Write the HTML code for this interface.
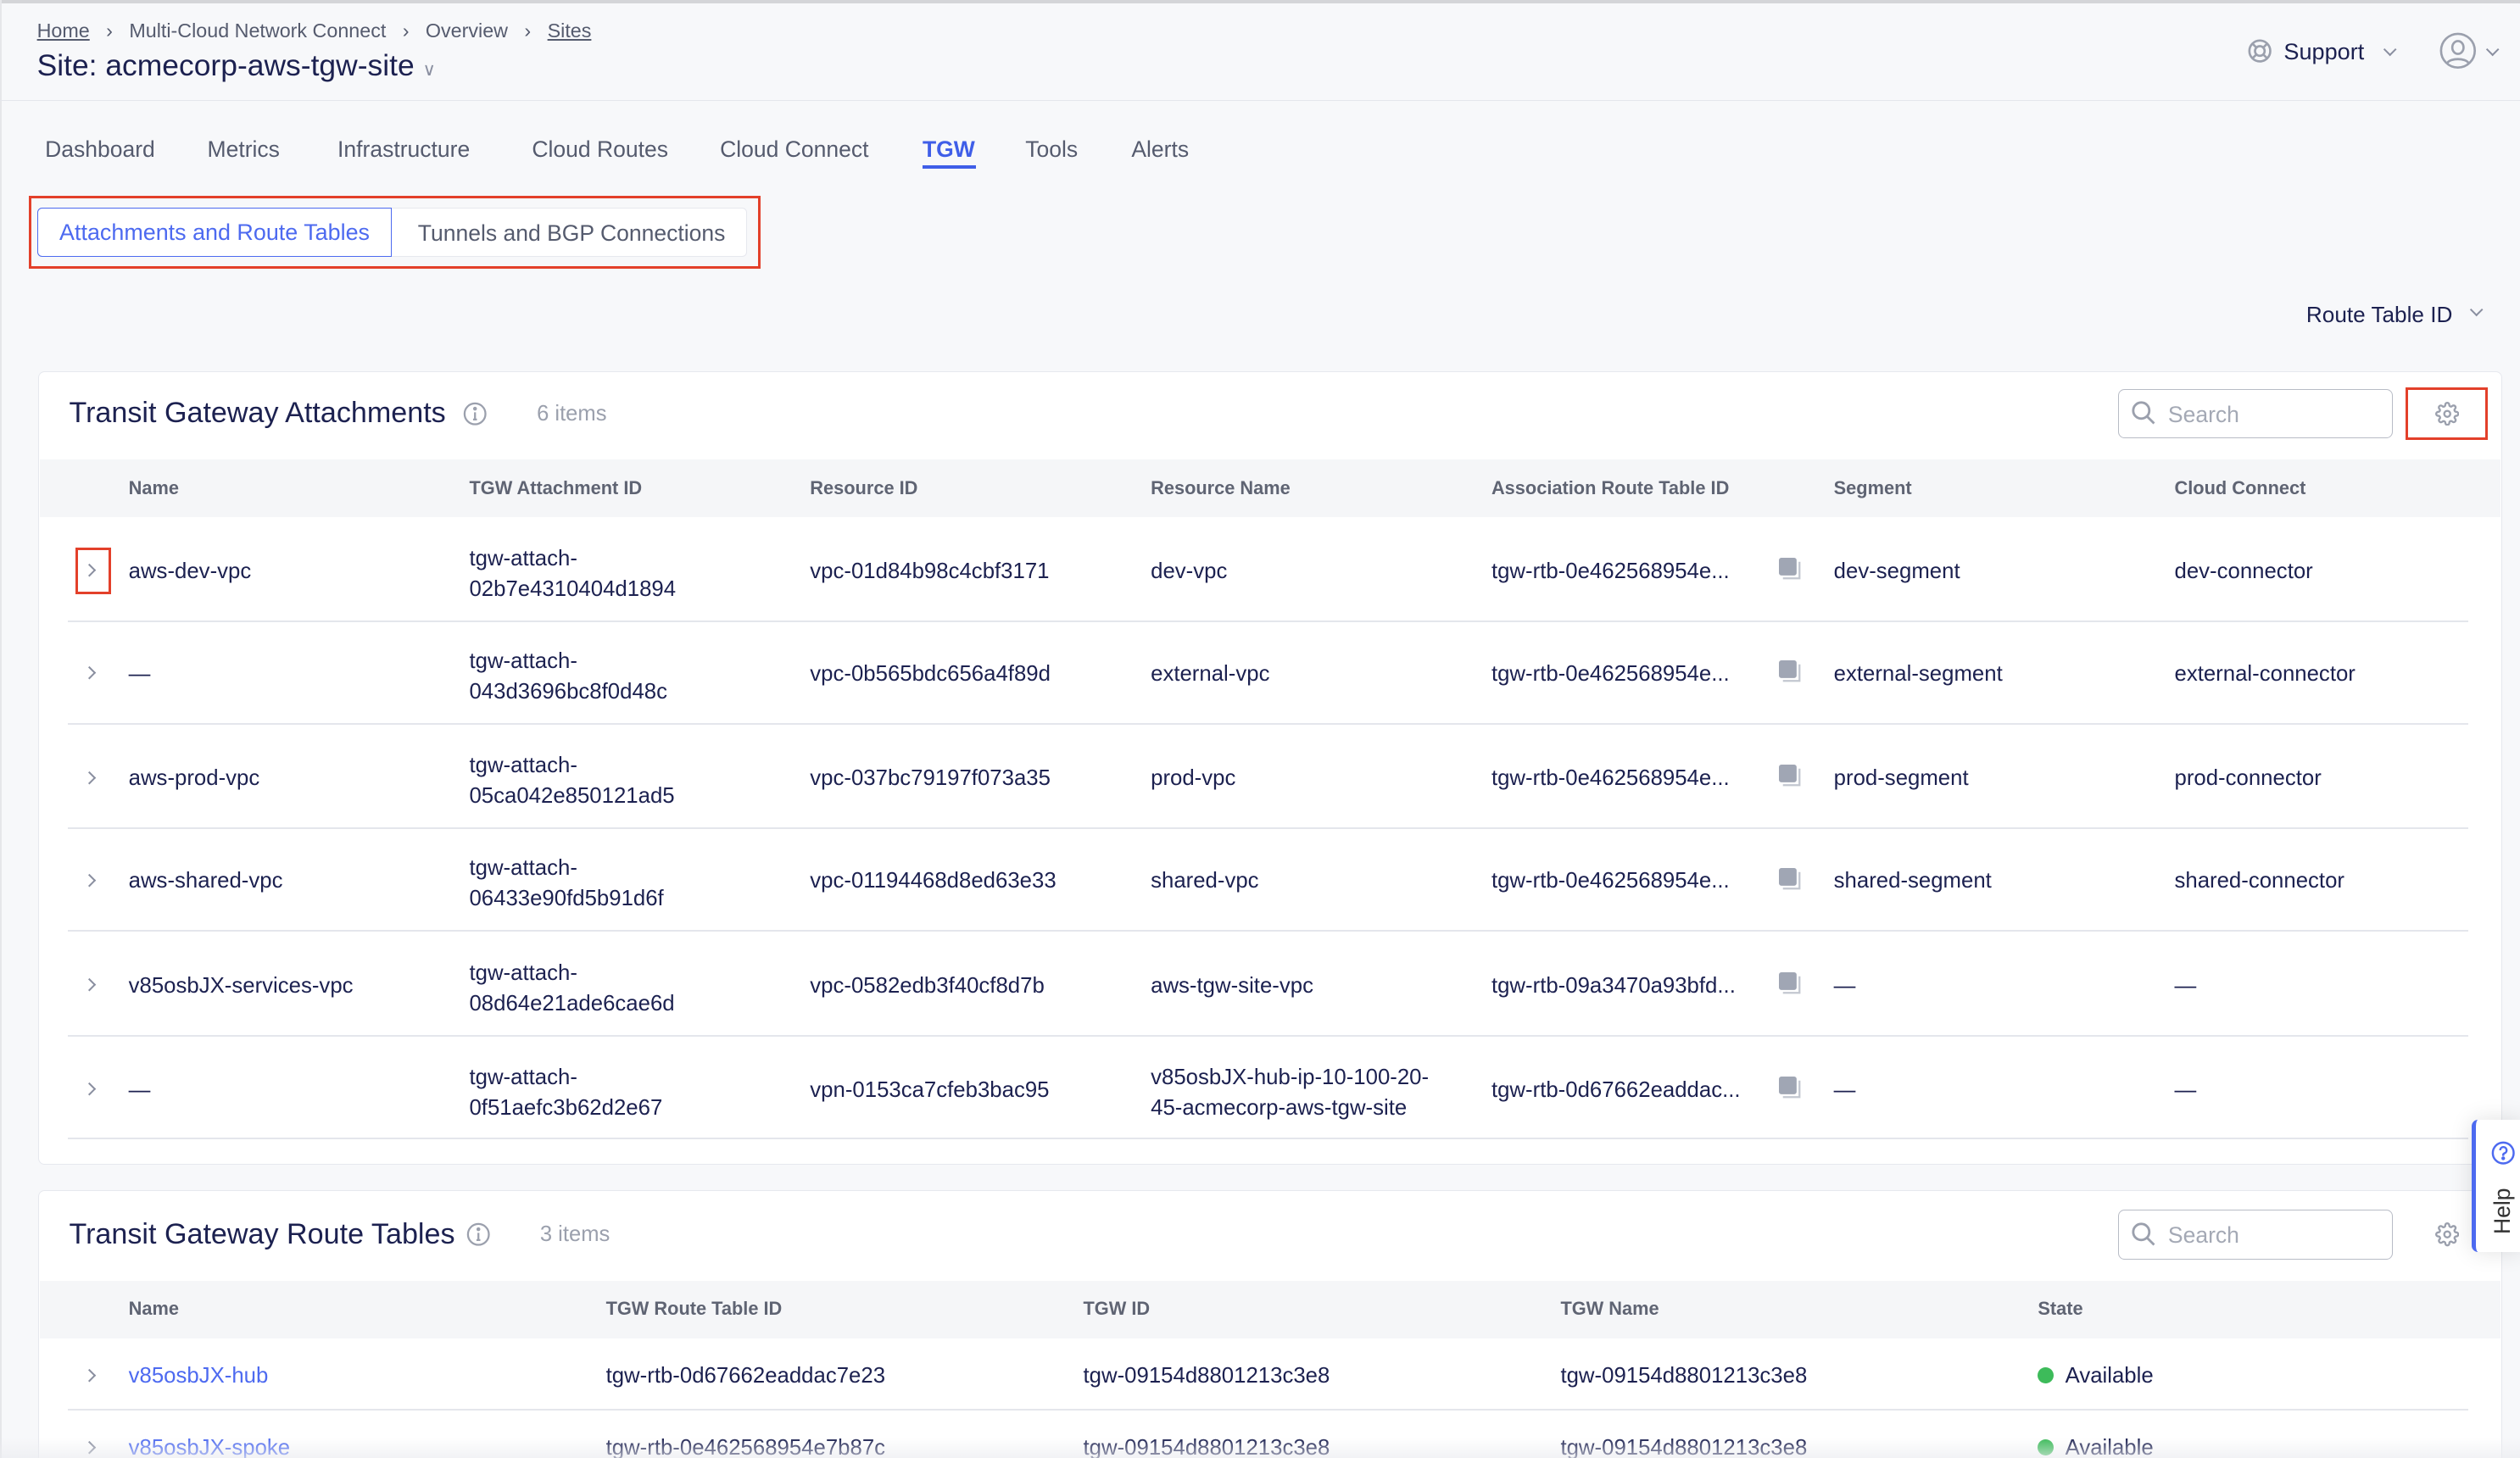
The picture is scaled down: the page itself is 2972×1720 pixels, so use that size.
<!DOCTYPE html>
<html><head><meta charset="utf-8">
<style>
*{box-sizing:border-box;margin:0;padding:0}
html,body{width:2972px;height:1720px;overflow:hidden;background:#f7f8fa}
#z{zoom:1.89541;width:1568px;height:908px;position:relative;font-family:"Liberation Sans",sans-serif;color:#1c2150;font-size:13.6px}
.a{position:absolute;white-space:nowrap}
.muted{color:#555b6e}
.hd{font-weight:bold;font-size:11.5px;color:#5f6473}
.chev{position:absolute;width:6px;height:6px;border-right:1.2px solid #8a8fa0;border-bottom:1.2px solid #8a8fa0}
.card{position:absolute;background:#fff;border:1px solid #e6e8ee;border-radius:4px}
.line{position:absolute;height:1px;background:#e4e6ec}
.copy{position:absolute;width:14px;height:14px}
.r{top:0}
</style></head><body><div id="z">
<div class="a" style="left:0;top:0;width:1568px;height:2px;background:#d4d5d8"></div>
<div class="a" style="left:0;top:0;width:1px;height:908px;background:#e6e7ea"></div>
<div class="a muted" style="left:23px;top:12px;font-size:12.3px">
<span style="text-decoration:underline">Home</span>&nbsp;&nbsp;&nbsp;›&nbsp;&nbsp;&nbsp;Multi-Cloud Network Connect&nbsp;&nbsp;&nbsp;›&nbsp;&nbsp;&nbsp;Overview&nbsp;&nbsp;&nbsp;›&nbsp;&nbsp;&nbsp;<span style="text-decoration:underline">Sites</span></div>
<div class="a" style="left:23px;top:30px;font-size:18.7px">Site: acmecorp-aws-tgw-site <span style="font-size:11px;color:#8a8fa0">&#x2228;</span></div>
<div class="a" style="left:0;top:62px;width:1568px;height:1px;background:#e4e6ec"></div>
<svg class="a" style="left:1398px;top:24px" width="16" height="16" viewBox="0 0 16 16" fill="none" stroke="#9ba0ad" stroke-width="1.4"><circle cx="8" cy="8" r="6.5"/><circle cx="8" cy="8" r="3"/><path d="M3.4 3.4l2.5 2.5M12.6 3.4l-2.5 2.5M3.4 12.6l2.5-2.5M12.6 12.6l-2.5-2.5"/></svg>
<div class="a" style="left:1421px;top:24px;font-size:14.3px">Support</div>
<div class="chev" style="left:1484px;top:28px;transform:rotate(45deg)"></div>
<svg class="a" style="left:1518px;top:20px" width="23" height="23" viewBox="0 0 23 23" fill="none" stroke="#9ba0ad" stroke-width="1.4"><circle cx="11.5" cy="11.5" r="10.5"/><ellipse cx="11.5" cy="9.5" rx="3.5" ry="4"/><path d="M5 19c2-3 11-3 13 0"/></svg>
<div class="chev" style="left:1548px;top:28px;transform:rotate(45deg)"></div>
<div class="a muted" style="left:28px;top:85px;font-size:14px">Dashboard</div>
<div class="a muted" style="left:129px;top:85px;font-size:14px">Metrics</div>
<div class="a muted" style="left:210px;top:85px;font-size:14px">Infrastructure</div>
<div class="a muted" style="left:331px;top:85px;font-size:14px">Cloud Routes</div>
<div class="a muted" style="left:448px;top:85px;font-size:14px">Cloud Connect</div>
<div class="a" style="left:574px;top:85px;font-size:14px;color:#3f5ee8;font-weight:bold">TGW</div>
<div class="a" style="left:574px;top:103px;width:33px;height:2px;background:#3f5ee8"></div>
<div class="a muted" style="left:638px;top:85px;font-size:14px">Tools</div>
<div class="a muted" style="left:704px;top:85px;font-size:14px">Alerts</div>
<div class="a" style="left:18px;top:122px;width:455px;height:45px;border:2px solid #e3402a"></div>
<div class="a" style="left:23px;top:129px;width:442px;height:31px;background:#fff;border:1px solid #e6e8ee;border-radius:3px"></div>
<div class="a" style="left:23px;top:129px;width:221px;height:31px;border:1px solid #4d6af0;border-radius:3px 0 0 3px;background:#fff;color:#4d6af0;font-size:14.2px;text-align:center;line-height:30px">Attachments and Route Tables</div>
<div class="a muted" style="left:260px;top:137px;font-size:14px">Tunnels and BGP Connections</div>
<div class="a" style="left:1435px;top:188px;font-size:13.8px">Route Table ID</div>
<div class="chev" style="left:1538px;top:190px;transform:rotate(45deg)"></div>

<div class="card" style="left:24px;top:231px;width:1533px;height:494px"></div>
<div class="a" style="left:43px;top:247px;font-size:18px">Transit Gateway Attachments</div>
<svg class="a" style="left:288px;top:250px" width="15" height="15" viewBox="0 0 15 15" fill="none" stroke="#9ba0ad" stroke-width="1.2"><circle cx="7.5" cy="7.5" r="6.5"/><path d="M7.5 6.5v4.5M6.3 11h2.4"/><circle cx="7.5" cy="4.3" r=".6" fill="#9ba0ad"/></svg>
<div class="a" style="left:334px;top:250px;font-size:13.5px;color:#9ba0ad">6 items</div>
<div class="a" style="left:1318px;top:242px;width:171px;height:31px;border:1px solid #b8bcc6;border-radius:4px;background:#fff"></div>
<svg class="a" style="left:1326px;top:249px" width="16" height="16" viewBox="0 0 16 16" fill="none" stroke="#9ba0ad" stroke-width="1.5"><circle cx="6.5" cy="6.5" r="5"/><path d="M10.2 10.2l4.3 4.3"/></svg>
<div class="a" style="left:1349px;top:250px;font-size:14px;color:#a4a9b5">Search</div>
<div class="a" style="left:1497px;top:241px;width:51px;height:33px;border:2px solid #e3402a"></div>
<svg class="a" style="left:1515px;top:250px" width="15" height="15" viewBox="0 0 24 24" fill="none" stroke="#9ba0ad" stroke-width="2"><circle cx="12" cy="12" r="3"/><path d="M19.4 15a1.65 1.65 0 0 0 .33 1.82l.06.06a2 2 0 1 1-2.83 2.83l-.06-.06a1.65 1.65 0 0 0-1.82-.33 1.65 1.65 0 0 0-1 1.51V21a2 2 0 0 1-4 0v-.09A1.65 1.65 0 0 0 9 19.4a1.65 1.65 0 0 0-1.82.33l-.06.06a2 2 0 1 1-2.83-2.83l.06-.06A1.65 1.65 0 0 0 4.68 15a1.65 1.65 0 0 0-1.51-1H3a2 2 0 0 1 0-4h.09A1.65 1.65 0 0 0 4.6 9a1.65 1.65 0 0 0-.33-1.82l-.06-.06a2 2 0 1 1 2.83-2.83l.06.06A1.65 1.65 0 0 0 9 4.68a1.65 1.65 0 0 0 1-1.51V3a2 2 0 0 1 4 0v.09a1.65 1.65 0 0 0 1 1.510 1.65 1.65 0 0 0 1.82-.33l.06-.06a2 2 0 1 1 2.83 2.83l-.06.06A1.65 1.65 0 0 0 19.4 9a1.65 1.65 0 0 0 1.51 1H21a2 2 0 0 1 0 4h-.09a1.65 1.65 0 0 0-1.51 1z"/></svg>
<div class="a" style="left:25px;top:286px;width:1531px;height:36px;background:#f5f6f8"></div>
<div class="a hd" style="left:80px;top:297px">Name</div>
<div class="a hd" style="left:292px;top:297px">TGW Attachment ID</div>
<div class="a hd" style="left:504px;top:297px">Resource ID</div>
<div class="a hd" style="left:716px;top:297px">Resource Name</div>
<div class="a hd" style="left:928px;top:297px">Association Route Table ID</div>
<div class="a hd" style="left:1141px;top:297px">Segment</div>
<div class="a hd" style="left:1353px;top:297px">Cloud Connect</div>

<div class="a" style="left:47px;top:341px;width:22px;height:29px;border:2px solid #e3402a"></div>
<div class="chev" style="left:53px;top:352px;transform:rotate(-45deg)"></div>
<div class="a" style="left:80px;top:348px">aws-dev-vpc</div>
<div class="a" style="left:292px;top:338px;line-height:19px">tgw-attach-<br>02b7e4310404d1894</div>
<div class="a" style="left:504px;top:348px">vpc-01d84b98c4cbf3171</div>
<div class="a" style="left:716px;top:348px">dev-vpc</div>
<div class="a" style="left:928px;top:348px">tgw-rtb-0e462568954e...</div>
<div class="a" style="left:1141px;top:348px">dev-segment</div>
<div class="a" style="left:1353px;top:348px">dev-connector</div>
<div class="line" style="left:42px;top:386px;width:1494px"></div>

<div class="chev" style="left:53px;top:416px;transform:rotate(-45deg)"></div>
<div class="a" style="left:80px;top:412px">—</div>
<div class="a" style="left:292px;top:402px;line-height:19px">tgw-attach-<br>043d3696bc8f0d48c</div>
<div class="a" style="left:504px;top:412px">vpc-0b565bdc656a4f89d</div>
<div class="a" style="left:716px;top:412px">external-vpc</div>
<div class="a" style="left:928px;top:412px">tgw-rtb-0e462568954e...</div>
<div class="a" style="left:1141px;top:412px">external-segment</div>
<div class="a" style="left:1353px;top:412px">external-connector</div>
<div class="line" style="left:42px;top:450px;width:1494px"></div>

<div class="chev" style="left:53px;top:481px;transform:rotate(-45deg)"></div>
<div class="a" style="left:80px;top:477px">aws-prod-vpc</div>
<div class="a" style="left:292px;top:467px;line-height:19px">tgw-attach-<br>05ca042e850121ad5</div>
<div class="a" style="left:504px;top:477px">vpc-037bc79197f073a35</div>
<div class="a" style="left:716px;top:477px">prod-vpc</div>
<div class="a" style="left:928px;top:477px">tgw-rtb-0e462568954e...</div>
<div class="a" style="left:1141px;top:477px">prod-segment</div>
<div class="a" style="left:1353px;top:477px">prod-connector</div>
<div class="line" style="left:42px;top:515px;width:1494px"></div>

<div class="chev" style="left:53px;top:545px;transform:rotate(-45deg)"></div>
<div class="a" style="left:80px;top:541px">aws-shared-vpc</div>
<div class="a" style="left:292px;top:531px;line-height:19px">tgw-attach-<br>06433e90fd5b91d6f</div>
<div class="a" style="left:504px;top:541px">vpc-01194468d8ed63e33</div>
<div class="a" style="left:716px;top:541px">shared-vpc</div>
<div class="a" style="left:928px;top:541px">tgw-rtb-0e462568954e...</div>
<div class="a" style="left:1141px;top:541px">shared-segment</div>
<div class="a" style="left:1353px;top:541px">shared-connector</div>
<div class="line" style="left:42px;top:579px;width:1494px"></div>

<div class="chev" style="left:53px;top:610px;transform:rotate(-45deg)"></div>
<div class="a" style="left:80px;top:606px">v85osbJX-services-vpc</div>
<div class="a" style="left:292px;top:596px;line-height:19px">tgw-attach-<br>08d64e21ade6cae6d</div>
<div class="a" style="left:504px;top:606px">vpc-0582edb3f40cf8d7b</div>
<div class="a" style="left:716px;top:606px">aws-tgw-site-vpc</div>
<div class="a" style="left:928px;top:606px">tgw-rtb-09a3470a93bfd...</div>
<div class="a" style="left:1141px;top:606px">—</div>
<div class="a" style="left:1353px;top:606px">—</div>
<div class="line" style="left:42px;top:644px;width:1494px"></div>

<div class="chev" style="left:53px;top:675px;transform:rotate(-45deg)"></div>
<div class="a" style="left:80px;top:671px">—</div>
<div class="a" style="left:292px;top:661px;line-height:19px">tgw-attach-<br>0f51aefc3b62d2e67</div>
<div class="a" style="left:504px;top:671px">vpn-0153ca7cfeb3bac95</div>
<div class="a" style="left:716px;top:661px;line-height:19px">v85osbJX-hub-ip-10-100-20-<br>45-acmecorp-aws-tgw-site</div>
<div class="a" style="left:928px;top:671px">tgw-rtb-0d67662eaddac...</div>
<div class="a" style="left:1141px;top:671px">—</div>
<div class="a" style="left:1353px;top:671px">—</div>
<div class="line" style="left:42px;top:708px;width:1494px"></div>

<svg class="copy" style="left:1107px;top:347px" viewBox="0 0 14 14"><rect x="0" y="0" width="11" height="11" rx="1.5" fill="#a0a6b4"/><path d="M12.8 2.5v10.3H2.5" fill="none" stroke="#c3c7d0" stroke-width="1.2"/></svg>
<svg class="copy" style="left:1107px;top:411px" viewBox="0 0 14 14"><rect x="0" y="0" width="11" height="11" rx="1.5" fill="#a0a6b4"/><path d="M12.8 2.5v10.3H2.5" fill="none" stroke="#c3c7d0" stroke-width="1.2"/></svg>
<svg class="copy" style="left:1107px;top:476px" viewBox="0 0 14 14"><rect x="0" y="0" width="11" height="11" rx="1.5" fill="#a0a6b4"/><path d="M12.8 2.5v10.3H2.5" fill="none" stroke="#c3c7d0" stroke-width="1.2"/></svg>
<svg class="copy" style="left:1107px;top:540px" viewBox="0 0 14 14"><rect x="0" y="0" width="11" height="11" rx="1.5" fill="#a0a6b4"/><path d="M12.8 2.5v10.3H2.5" fill="none" stroke="#c3c7d0" stroke-width="1.2"/></svg>
<svg class="copy" style="left:1107px;top:605px" viewBox="0 0 14 14"><rect x="0" y="0" width="11" height="11" rx="1.5" fill="#a0a6b4"/><path d="M12.8 2.5v10.3H2.5" fill="none" stroke="#c3c7d0" stroke-width="1.2"/></svg>
<svg class="copy" style="left:1107px;top:670px" viewBox="0 0 14 14"><rect x="0" y="0" width="11" height="11" rx="1.5" fill="#a0a6b4"/><path d="M12.8 2.5v10.3H2.5" fill="none" stroke="#c3c7d0" stroke-width="1.2"/></svg>

<div class="card" style="left:24px;top:741px;width:1533px;height:200px"></div>
<div class="a" style="left:43px;top:758px;font-size:18px">Transit Gateway Route Tables</div>
<svg class="a" style="left:290px;top:761px" width="15" height="15" viewBox="0 0 15 15" fill="none" stroke="#9ba0ad" stroke-width="1.2"><circle cx="7.5" cy="7.5" r="6.5"/><path d="M7.5 6.5v4.5M6.3 11h2.4"/><circle cx="7.5" cy="4.3" r=".6" fill="#9ba0ad"/></svg>
<div class="a" style="left:336px;top:761px;font-size:13.5px;color:#9ba0ad">3 items</div>
<div class="a" style="left:1318px;top:753px;width:171px;height:31px;border:1px solid #b8bcc6;border-radius:4px;background:#fff"></div>
<svg class="a" style="left:1326px;top:760px" width="16" height="16" viewBox="0 0 16 16" fill="none" stroke="#9ba0ad" stroke-width="1.5"><circle cx="6.5" cy="6.5" r="5"/><path d="M10.2 10.2l4.3 4.3"/></svg>
<div class="a" style="left:1349px;top:761px;font-size:14px;color:#a4a9b5">Search</div>
<svg class="a" style="left:1515px;top:761px" width="15" height="15" viewBox="0 0 24 24" fill="none" stroke="#9ba0ad" stroke-width="2"><circle cx="12" cy="12" r="3"/><path d="M19.4 15a1.65 1.65 0 0 0 .33 1.82l.06.06a2 2 0 1 1-2.83 2.83l-.06-.06a1.65 1.65 0 0 0-1.82-.33 1.65 1.65 0 0 0-1 1.51V21a2 2 0 0 1-4 0v-.09A1.65 1.65 0 0 0 9 19.4a1.65 1.65 0 0 0-1.82.33l-.06.06a2 2 0 1 1-2.83-2.83l.06-.06A1.65 1.65 0 0 0 4.68 15a1.65 1.65 0 0 0-1.51-1H3a2 2 0 0 1 0-4h.09A1.65 1.65 0 0 0 4.6 9a1.65 1.65 0 0 0-.33-1.82l-.06-.06a2 2 0 1 1 2.83-2.83l.06.06A1.65 1.65 0 0 0 9 4.68a1.65 1.65 0 0 0 1-1.51V3a2 2 0 0 1 4 0v.09a1.65 1.65 0 0 0 1 1.51 1.65 1.65 0 0 0 1.82-.33l.06-.06a2 2 0 1 1 2.83 2.83l-.06.06A1.65 1.65 0 0 0 19.4 9a1.65 1.65 0 0 0 1.51 1H21a2 2 0 0 1 0 4h-.09a1.65 1.65 0 0 0-1.51 1z"/></svg>
<div class="a" style="left:25px;top:797px;width:1531px;height:36px;background:#f5f6f8"></div>
<div class="a hd" style="left:80px;top:808px">Name</div>
<div class="a hd" style="left:377px;top:808px">TGW Route Table ID</div>
<div class="a hd" style="left:674px;top:808px">TGW ID</div>
<div class="a hd" style="left:971px;top:808px">TGW Name</div>
<div class="a hd" style="left:1268px;top:808px">State</div>
<div class="chev" style="left:53px;top:853px;transform:rotate(-45deg)"></div>
<div class="a" style="left:80px;top:849px;color:#4d6af0">v85osbJX-hub</div>
<div class="a" style="left:377px;top:849px">tgw-rtb-0d67662eaddac7e23</div>
<div class="a" style="left:674px;top:849px">tgw-09154d8801213c3e8</div>
<div class="a" style="left:971px;top:849px">tgw-09154d8801213c3e8</div>
<div class="a" style="left:1268px;top:851px;width:10px;height:10px;border-radius:50%;background:#3dbb5a"></div>
<div class="a" style="left:1285px;top:849px">Available</div>
<div class="line" style="left:42px;top:877px;width:1494px"></div>
<div class="chev" style="left:53px;top:898px;transform:rotate(-45deg)"></div>
<div class="a" style="left:80px;top:894px;color:#4d6af0">v85osbJX-spoke</div>
<div class="a" style="left:377px;top:894px">tgw-rtb-0e462568954e7b87c</div>
<div class="a" style="left:674px;top:894px">tgw-09154d8801213c3e8</div>
<div class="a" style="left:971px;top:894px">tgw-09154d8801213c3e8</div>
<div class="a" style="left:1268px;top:896px;width:10px;height:10px;border-radius:50%;background:#3dbb5a"></div>
<div class="a" style="left:1285px;top:894px">Available</div>
<div class="a" style="left:0;top:895px;width:1568px;height:13px;background:linear-gradient(rgba(240,241,244,0),rgba(235,236,240,.7))"></div>

<div class="a" style="left:1538px;top:697px;width:32px;height:82px;background:#fff;border-left:3px solid #4d6af0;border-radius:4px 0 0 4px;box-shadow:0 0 14px rgba(0,0,0,.12)"></div>
<svg class="a" style="left:1550px;top:710px" width="15" height="15" viewBox="0 0 15 15" fill="none" stroke="#4d6af0" stroke-width="1.3"><circle cx="7.5" cy="7.5" r="6.5"/><path d="M5.6 5.8a2 2 0 1 1 2.6 1.9c-.5.2-.7.5-.7 1v.6"/><circle cx="7.5" cy="10.8" r=".5" fill="#4d6af0"/></svg>
<div class="a" style="left:1549px;top:768px;font-size:14px;color:#333;transform:rotate(-90deg);transform-origin:0 0">Help</div>
</div></body></html>
